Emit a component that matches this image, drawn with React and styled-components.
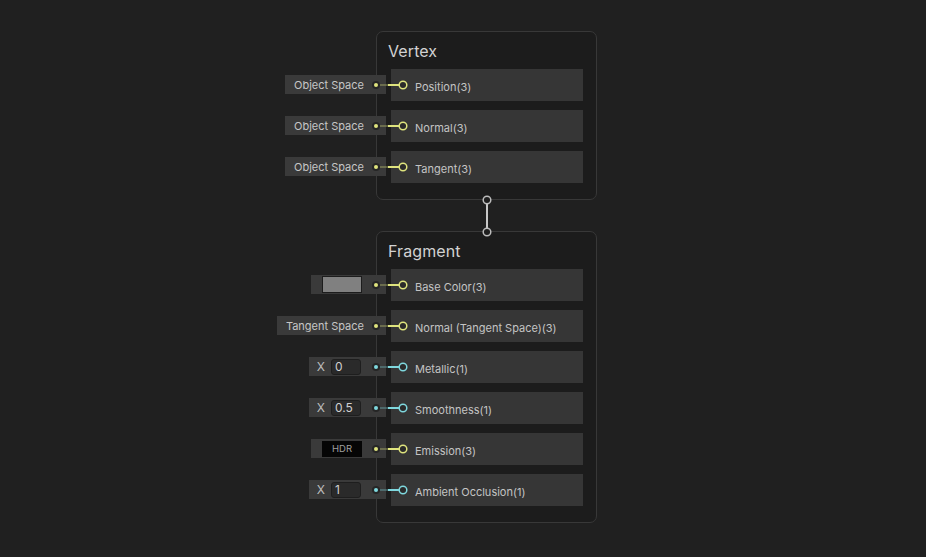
import React from "react";
import styled, { createGlobalStyle } from "styled-components";

const VEC3 = "#dfe47e";
const VEC1 = "#7fd8de";

const GlobalStyle = createGlobalStyle`
  html, body {
    margin: 0;
    padding: 0;
    background: #202020;
  }
  #root {
    height: 557px;
  }
  * {
    box-sizing: border-box;
  }
`;

const Canvas = styled.div`
  height: 557px;
  padding: 31px 0 0 376px;
  font-family: Inter, "Noto Sans", sans-serif;
  display: flex;
  flex-direction: column;
`;

const Node = styled.div`
  width: 221px;
  background: #1c1c1c;
  border: 1px solid #383838;
  border-radius: 7px;
  padding: 0 13px 16px 14px;
  display: flex;
  flex-direction: column;
  gap: 9px;
`;

const Title = styled.div`
  height: 37px;
  margin: 0 0 -9px -3px;
  padding-top: 9px;
  font-size: 16px;
  color: #d2d2d2;
  letter-spacing: 0.1px;
`;

const Slot = styled.div`
  position: relative;
  height: 32px;
  width: 192px;
  background: #363636;
  display: flex;
  align-items: center;
  padding: 3px 0 0 24px;
  font-size: 11px;
  color: #c4c4c4;
`;

const Widget = styled.div`
  position: absolute;
  right: calc(100% + 5px);
  top: 6px;
  height: 19px;
  background: #3a3a3a;
  display: flex;
  align-items: center;
  gap: 6px;
  padding: 0 ${(p) => p.$pr || 22}px 0 ${(p) => p.$pl || 9}px;
  font-size: 11px;
  color: #c6c6c6;
  white-space: nowrap;
`;

const Swatch = styled.div`
  width: 40px;
  height: 17px;
  background: #808080;
  border: 1px solid #1c1c1c;
`;

const HdrField = styled.div`
  width: 40px;
  height: 16px;
  background: #050505;
  color: #a0a0a0;
  font-size: 9.5px;
  display: flex;
  align-items: center;
  justify-content: center;
`;

const AxisLabel = styled.span`
  font-size: 12px;
  color: #bdbdbd;
`;

const NumberField = styled.div`
  width: 30px;
  height: 16px;
  background: #2a2a2a;
  border: 1px solid #1e1e1e;
  border-radius: 3px;
  font-size: 12px;
  color: #d0d0d0;
  padding-left: 3px;
  display: flex;
  align-items: center;
`;

const Wire = styled.svg`
  position: absolute;
  left: -21px;
  top: 0;
  overflow: visible;
`;

const Link = styled.div`
  position: relative;
  width: 221px;
  height: 31px;
`;

const LinkWire = styled.svg`
  position: absolute;
  left: 105px;
  top: -6px;
`;

const PortWire = ({ color }) => (
  <Wire width="40" height="32">
    <circle cx="6" cy="16" r="4" fill="#262626" />
    <circle cx="6" cy="16" r="2" fill={color} />
    <line x1="10" y1="16" x2="18" y2="16" stroke={color} strokeOpacity="0.3" strokeWidth="2" />
    <line x1="18" y1="16" x2="29" y2="16" stroke={color} strokeWidth="2" />
    <circle cx="33" cy="16" r="3.8" fill="#2a2a2a" stroke={color} strokeWidth="1.5" />
  </Wire>
);

const Port = ({ label, color = VEC3, children, pl, pr }) => (
  <Slot>
    {children && (
      <Widget $pl={pl} $pr={pr}>
        {children}
      </Widget>
    )}
    <PortWire color={color} />
    {label}
  </Slot>
);

const FloatInput = ({ value }) => (
  <>
    <AxisLabel>X</AxisLabel>
    <NumberField>{value}</NumberField>
  </>
);

export default function App() {
  return (
    <>
      <GlobalStyle />
      <Canvas>
        <Node>
          <Title>Vertex</Title>
          <Port label="Position(3)">Object Space</Port>
          <Port label="Normal(3)">Object Space</Port>
          <Port label="Tangent(3)">Object Space</Port>
        </Node>
        <Link>
          <LinkWire width="12" height="45">
            <line x1="6" y1="10" x2="6" y2="34" stroke="#c8c8c8" strokeWidth="2" />
            <circle cx="6" cy="6" r="3.8" fill="#1f1f1f" stroke="#bcbcbc" strokeWidth="1.5" />
            <circle cx="6" cy="38" r="3.8" fill="#1f1f1f" stroke="#bcbcbc" strokeWidth="1.5" />
          </LinkWire>
        </Link>
        <Node>
          <Title>Fragment</Title>
          <Port label="Base Color(3)" pl={11} pr={24}>
            <Swatch />
          </Port>
          <Port label="Normal (Tangent Space)(3)">Tangent Space</Port>
          <Port label="Metallic(1)" color={VEC1} pl={8} pr={25}>
            <FloatInput value="0" />
          </Port>
          <Port label="Smoothness(1)" color={VEC1} pl={8} pr={25}>
            <FloatInput value="0.5" />
          </Port>
          <Port label="Emission(3)" pl={11} pr={24}>
            <HdrField>HDR</HdrField>
          </Port>
          <Port label="Ambient Occlusion(1)" color={VEC1} pl={8} pr={25}>
            <FloatInput value="1" />
          </Port>
        </Node>
      </Canvas>
    </>
  );
}
